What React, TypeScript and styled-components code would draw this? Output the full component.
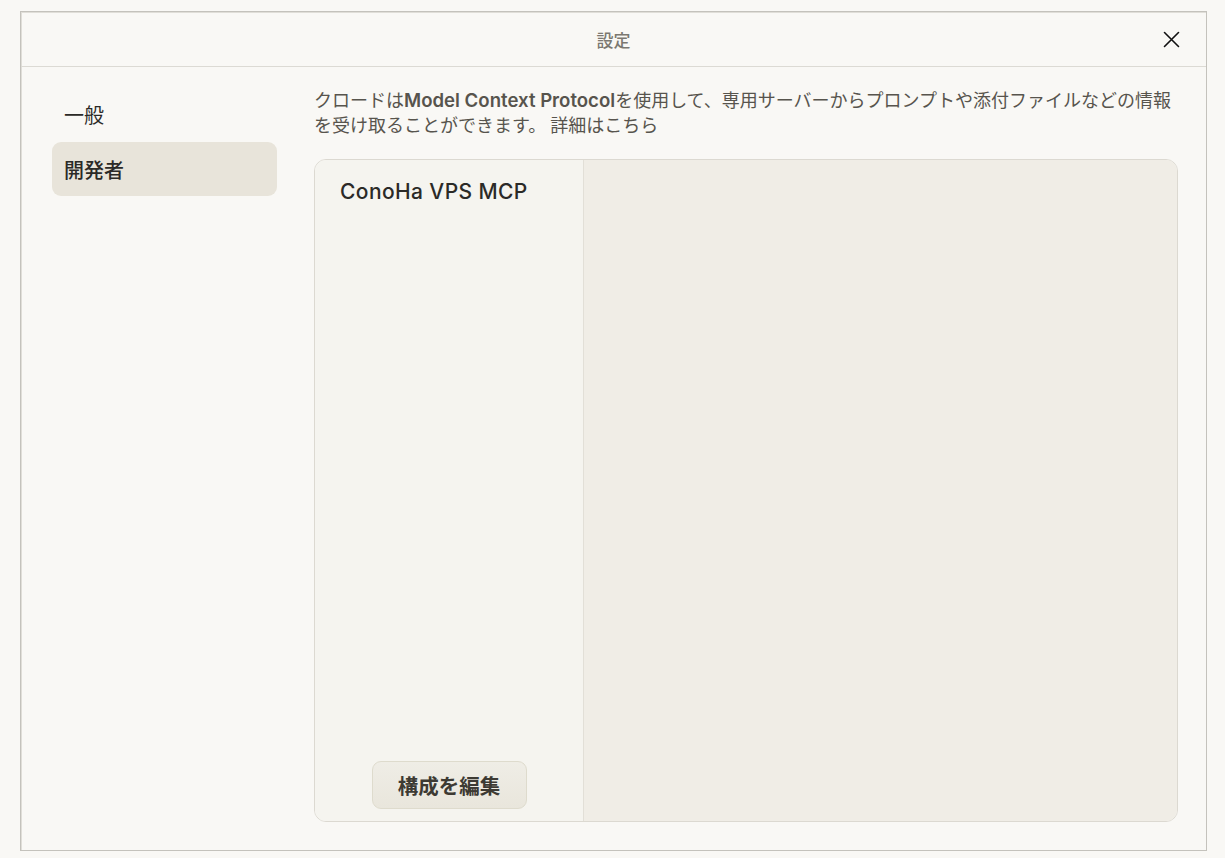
import React from "react";
import styled, { createGlobalStyle } from "styled-components";

const GlobalStyle = createGlobalStyle`
  html, body {
    margin: 0;
    padding: 0;
    background: #f9f8f5;
    font-family: Inter, "Noto Sans CJK JP", "Noto Sans", sans-serif;
    color: #2b2a27;
  }
`;

const Dialog = styled.div`
  box-sizing: border-box;
  margin: 11px 0 0 20px;
  width: 1187px;
  height: 840px;
  border: 1px solid #c4c2bc;
  box-shadow: inset 1px 1px 0 #e0ded8;
  background: #f9f8f5;
  display: flex;
  flex-direction: column;
`;

const Header = styled.header`
  position: relative;
  box-sizing: border-box;
  height: 55px;
  flex: none;
  border-bottom: 1px solid #dcdad4;
  display: flex;
  align-items: center;
  justify-content: center;
`;

const Title = styled.h1`
  margin: 0;
  font-family: "Noto Sans CJK JP", sans-serif;
  font-size: 17px;
  font-weight: 500;
  color: #7b7871;
`;

const CloseButton = styled.button`
  position: absolute;
  right: 24px;
  top: 16px;
  width: 22px;
  height: 22px;
  padding: 0;
  border: none;
  background: transparent;
  display: flex;
  align-items: center;
  justify-content: center;
  cursor: pointer;
`;

const Body = styled.div`
  flex: 1;
  display: flex;
  gap: 37px;
  padding: 20px 28px 28px 31px;
  min-height: 0;
`;

const Sidebar = styled.nav`
  width: 225px;
  flex: none;
  display: flex;
  flex-direction: column;
  gap: 1px;
`;

const NavItem = styled.div<{ $active?: boolean }>`
  height: 54px;
  box-sizing: border-box;
  padding-left: 12px;
  display: flex;
  align-items: center;
  border-radius: 9px;
  font-family: "Noto Sans CJK JP", sans-serif;
  font-size: 20px;
  font-weight: ${(p) => (p.$active ? 500 : 400)};
  color: #2b2a27;
  background: ${(p) => (p.$active ? "#e8e4da" : "transparent")};
`;

const Content = styled.main`
  flex: 1;
  display: flex;
  flex-direction: column;
  min-width: 0;
`;

const Description = styled.p`
  margin: 0;
  font-size: 18px;
  line-height: 24px;
  color: #57544d;
  font-family: "Noto Sans CJK JP", sans-serif;
`;

const Em = styled.span`
  font-family: Inter, "Noto Sans CJK JP", sans-serif;
  font-weight: 600;
  font-size: 18.6px;
`;

const Panel = styled.section`
  margin-top: 23px;
  flex: 1;
  display: flex;
  border: 1px solid #dcd9d1;
  border-radius: 12px;
  overflow: hidden;
`;

const ServerList = styled.div`
  width: 269px;
  flex: none;
  box-sizing: border-box;
  background: #f5f4ef;
  border-right: 1px solid #e2dfd7;
  display: flex;
  flex-direction: column;
  align-items: stretch;
  padding: 20px 0 12px;
`;

const ServerName = styled.div`
  padding-left: 25px;
  font-size: 21px;
  line-height: 24px;
  font-weight: 500;
  color: #2b2a27;
  letter-spacing: 0.4px;
`;

const Spacer = styled.div`
  flex: 1;
`;

const EditButton = styled.button`
  align-self: center;
  width: 155px;
  height: 48px;
  border: 1px solid #dedbcd;
  border-radius: 9px;
  background: linear-gradient(180deg, #efede6 0%, #e9e6dc 100%);
  font-family: "Noto Sans CJK JP", sans-serif;
  font-size: 20.5px;
  font-weight: 600;
  color: #3d3a33;
  cursor: pointer;
  padding: 0;
`;

const Detail = styled.div`
  flex: 1;
  background: #f0ede6;
`;

export default function App() {
  return (
    <>
      <GlobalStyle />
      <Dialog>
        <Header>
          <Title>設定</Title>
          <CloseButton aria-label="閉じる">
            <svg width="17" height="17" viewBox="0 0 17 17">
              <path d="M1.5 1.5 L15.5 15.5 M15.5 1.5 L1.5 15.5" stroke="#111" strokeWidth="1.6" strokeLinecap="round" />
            </svg>
          </CloseButton>
        </Header>
        <Body>
          <Sidebar>
            <NavItem>一般</NavItem>
            <NavItem $active>開発者</NavItem>
          </Sidebar>
          <Content>
            <Description>
              クロードは<Em>Model Context Protocol</Em>を使用して、専用サーバーからプロンプトや添付ファイルなどの情報を受け取ることができます。 詳細はこちら
            </Description>
            <Panel>
              <ServerList>
                <ServerName>ConoHa VPS MCP</ServerName>
                <Spacer />
                <EditButton>構成を編集</EditButton>
              </ServerList>
              <Detail />
            </Panel>
          </Content>
        </Body>
      </Dialog>
    </>
  );
}
